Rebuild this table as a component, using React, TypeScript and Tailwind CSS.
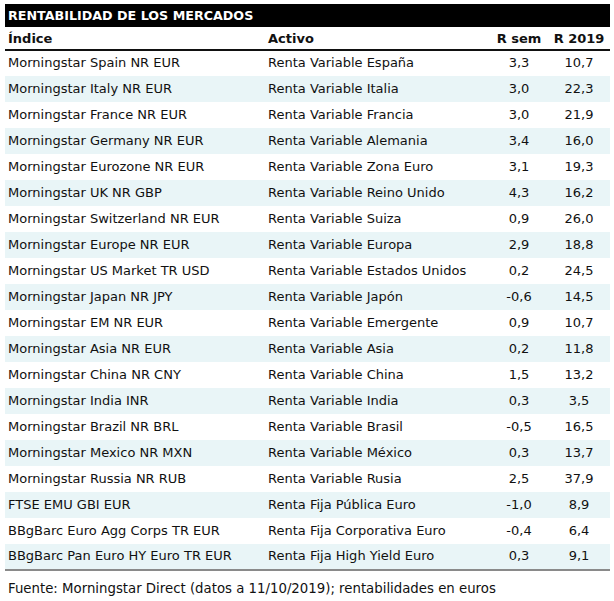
import React from 'react';

const rows: [string, string, string, string][] = [
  ['Morningstar Spain NR EUR', 'Renta Variable España', '3,3', '10,7'],
  ['Morningstar Italy NR EUR', 'Renta Variable Italia', '3,0', '22,3'],
  ['Morningstar France NR EUR', 'Renta Variable Francia', '3,0', '21,9'],
  ['Morningstar Germany NR EUR', 'Renta Variable Alemania', '3,4', '16,0'],
  ['Morningstar Eurozone NR EUR', 'Renta Variable Zona Euro', '3,1', '19,3'],
  ['Morningstar UK NR GBP', 'Renta Variable Reino Unido', '4,3', '16,2'],
  ['Morningstar Switzerland NR EUR', 'Renta Variable Suiza', '0,9', '26,0'],
  ['Morningstar Europe NR EUR', 'Renta Variable Europa', '2,9', '18,8'],
  ['Morningstar US Market TR USD', 'Renta Variable Estados Unidos', '0,2', '24,5'],
  ['Morningstar Japan NR JPY', 'Renta Variable Japón', '-0,6', '14,5'],
  ['Morningstar EM NR EUR', 'Renta Variable Emergente', '0,9', '10,7'],
  ['Morningstar Asia NR EUR', 'Renta Variable Asia', '0,2', '11,8'],
  ['Morningstar China NR CNY', 'Renta Variable China', '1,5', '13,2'],
  ['Morningstar India INR', 'Renta Variable India', '0,3', '3,5'],
  ['Morningstar Brazil NR BRL', 'Renta Variable Brasil', '-0,5', '16,5'],
  ['Morningstar Mexico NR MXN', 'Renta Variable México', '0,3', '13,7'],
  ['Morningstar Russia NR RUB', 'Renta Variable Rusia', '2,5', '37,9'],
  ['FTSE EMU GBI EUR', 'Renta Fija Pública Euro', '-1,0', '8,9'],
  ['BBgBarc Euro Agg Corps TR EUR', 'Renta Fija Corporativa Euro', '-0,4', '6,4'],
  ['BBgBarc Pan Euro HY Euro TR EUR', 'Renta Fija High Yield Euro', '0,3', '9,1'],
];

export default function App() {
  return (
    <div className="w-[614px] h-[601px] bg-white pt-[4px] pl-[5px] text-[#111] text-[13px] font-['Verdana','DejaVu_Sans',sans-serif]">
      {/* Title bar */}
      <div className="w-[605px] h-[23px] bg-black text-white font-bold text-[12.7px] pl-[3px] pt-[1px] flex items-center">
        RENTABILIDAD DE LOS MERCADOS
      </div>
      <table className="w-[605px] border-collapse table-fixed">
        <colgroup>
          <col className="w-[260px]" />
          <col className="w-[225px]" />
          <col className="w-[58px]" />
          <col className="w-[62px]" />
        </colgroup>
        <thead>
          <tr className="h-[22px] border-b-2 border-[#111] font-bold">
            <th className="text-left pl-[3px] pt-[2px] font-bold">Índice</th>
            <th className="text-left pl-[3px] pt-[2px] font-bold">Activo</th>
            <th className="text-center pt-[2px] font-bold">R sem</th>
            <th className="text-center pt-[2px] font-bold">R 2019</th>
          </tr>
        </thead>
        <tbody className="border-b-2 border-[#8a8a8a]">
          {rows.map((r, i) => (
            <tr key={i} className={`h-[26px] ${i % 2 === 1 ? 'bg-[#e9f5f7]' : 'bg-white'}`}>
              <td className="pl-[3px] whitespace-nowrap">{r[0]}</td>
              <td className="pl-[3px] whitespace-nowrap">{r[1]}</td>
              <td className="text-center">{r[2]}</td>
              <td className="text-center">{r[3]}</td>
            </tr>
          ))}
        </tbody>
      </table>
      <div className="pl-[3px] pt-[8px] text-[13.3px]">Fuente: Morningstar Direct (datos a 11/10/2019); rentabilidades en euros</div>
    </div>
  );
}
